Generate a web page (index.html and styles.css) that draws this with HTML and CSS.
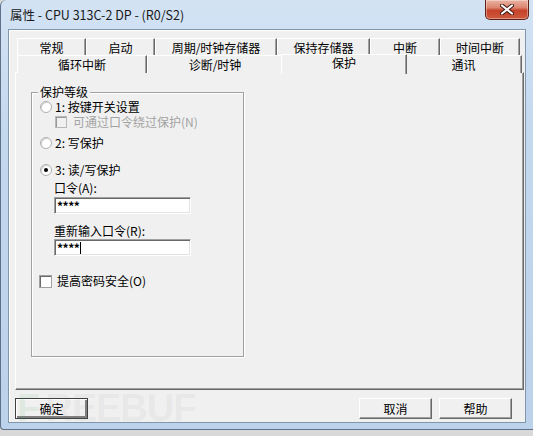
FILE: index.html
```html
<!DOCTYPE html>
<html lang="zh-CN">
<head>
    <meta charset="UTF-8">
    <title>属性 - CPU 313C-2 DP - (R0/S2)</title>
    <link rel="stylesheet" href="styles.css">
</head>
<body>
    <div class="window">
        <div class="titlebar">
            <span class="title">属性 - CPU 313C-2 DP - (R0/S2)</span>
            <div class="close-btn">
                <svg width="14" height="11" viewBox="0 0 14 11">
                    <path d="M2 1.5 L12 9.5 M12 1.5 L2 9.5" stroke="#3a1410" stroke-width="4" stroke-linecap="round"/>
                    <path d="M2 1.5 L12 9.5 M12 1.5 L2 9.5" stroke="#fff" stroke-width="2.2" stroke-linecap="round"/>
                </svg>
            </div>
        </div>

        <div class="client">
            <!-- 选项卡 -->
            <div class="tab-row tab-row-top">
                <div class="tab">常规</div>
                <div class="tab">启动</div>
                <div class="tab">周期/时钟存储器</div>
                <div class="tab">保持存储器</div>
                <div class="tab">中断</div>
                <div class="tab">时间中断</div>
            </div>
            <div class="tab-row tab-row-bottom">
                <div class="tab">循环中断</div>
                <div class="tab">诊断/时钟</div>
                <div class="tab active">保护</div>
                <div class="tab">通讯</div>
            </div>

            <div class="panel">
                <div class="group">
                    <div class="group-title">保护等级</div>

                    <div class="row row-1">
                        <span class="radio"></span>
                        <span>1: 按键开关设置</span>
                    </div>
                    <div class="row row-sub">
                        <span class="checkbox disabled"></span>
                        <span class="text-disabled">可通过口令绕过保护(N)</span>
                    </div>
                    <div class="row row-2">
                        <span class="radio"></span>
                        <span>2: 写保护</span>
                    </div>
                    <div class="row row-3">
                        <span class="radio checked"></span>
                        <span>3: 读/写保护</span>
                    </div>

                    <div class="field-label first">口令(A):</div>
                    <div class="input first">****</div>
                    <div class="field-label second">重新输入口令(R):</div>
                    <div class="input">****<span class="caret"></span></div>

                    <div class="row row-secure">
                        <span class="checkbox"></span>
                        <span>提高密码安全(O)</span>
                    </div>
                </div>
            </div>

            <div class="button-bar">
                <div class="btn default">确定</div>
                <div class="spacer"></div>
                <div class="btn">取消</div>
                <div class="btn">帮助</div>
            </div>
        </div>

        <div class="watermark"><span class="wm-logo">F</span>REEBUF</div>
    </div>
</body>
</html>
```

FILE: styles.css
```css
* {
    box-sizing: border-box;
}

body {
    margin: 0;
    background: #d9d9d9;
    font-family: "Noto Sans CJK SC", sans-serif;
    font-size: 12px;
    color: #000;
}

.window {
    position: relative;
    width: 533px;
    height: 430px;
    background: linear-gradient(to bottom, #d3e3f4 0%, #c4d8ee 30%, #bcd2ea 100%);
    border-left: 1px solid #5d7188;
    border-bottom: 1px solid #5d7188;
    border-top-left-radius: 6px;
    border-bottom-left-radius: 4px;
}

.titlebar {
    height: 29px;
    display: flex;
    justify-content: space-between;
    align-items: flex-start;
}

.title {
    padding: 7px 0 0 9px;
    line-height: 16px;
    font-size: 12.5px;
    color: #1a1a1a;
}

.close-btn {
    width: 44px;
    height: 20px;
    margin-right: 4px;
    display: flex;
    align-items: center;
    justify-content: center;
    background: linear-gradient(to bottom, #eab3a3 0%, #dc8570 40%, #c6432c 55%, #cf5a3c 100%);
    border: 1px solid #5e2219;
    border-top: none;
    border-radius: 0 0 5px 5px;
    box-shadow: inset 0 0 0 1px rgba(255,255,255,0.35);
}

.client {
    height: 394px;
    margin: 0 7px 0 7px;
    padding: 8px 1px 3px 6px;
    background: #f0f0f0;
    border: 1px solid #8196ad;
    box-shadow: inset 1px 1px 0 #fff;
}

/* 选项卡 */
.tab-row {
    display: grid;
    height: 17px;
    margin-left: 2px;
}

.tab-row-top {
    grid-template-columns: 69px 69px 122px 93px 70px 80px;
}

.tab-row-bottom {
    grid-template-columns: 130px 136px 122px 117px;
}

.tab {
    text-align: center;
    line-height: 17px;
    background: #f0f0f0;
    border-top: 1px solid #fff;
    border-left: 1px solid #fff;
    border-right: 1px solid #696969;
    box-shadow: inset -1px 0 0 #a0a0a0;
}

.tab.active {
    position: relative;
    z-index: 1;
    margin: -1px -2px -1px -2px;
    line-height: 15px;
    border-top: 1px solid #fff;
}

.panel {
    width: 509px;
    height: 318px;
    padding: 19px 0 0 15px;
    background: #f0f0f0;
    border-top: 1px solid #fff;
    border-left: 1px solid #fff;
    border-right: 1px solid #696969;
    border-bottom: 1px solid #696969;
    box-shadow: inset -1px -1px 0 #a0a0a0;
}

.group {
    width: 213px;
    height: 265px;
    padding-left: 8px;
    border: 1px solid #a0a0a0;
    box-shadow: 1px 1px 0 #fff, inset 1px 1px 0 #fff;
}

.group-title {
    width: fit-content;
    margin: -9px 0 0 -2px;
    padding: 0 2px;
    line-height: 16px;
    background: #f0f0f0;
}

.row {
    display: flex;
    align-items: center;
    height: 16px;
    line-height: 16px;
}

.row-1 { margin-top: -1px; }
.row-sub { margin-top: -1px; padding-left: 15px; }
.row-2 { margin-top: 5px; }
.row-3 { margin-top: 11px; }
.row-secure { margin-top: 17px; margin-left: -1px; }

.radio {
    width: 12px;
    height: 12px;
    margin-right: 3px;
    border-radius: 50%;
    background: #fff;
    border: 1px solid #b0b0b0;
    box-shadow: inset 1px 1px 0 #d0d0d0;
    display: flex;
    align-items: center;
    justify-content: center;
}

.radio.checked::after {
    content: "";
    width: 4px;
    height: 4px;
    border-radius: 50%;
    background: #000;
}

.checkbox {
    width: 13px;
    height: 13px;
    margin-right: 5px;
    background: #fff;
    border: 1px solid #a0a0a0;
    box-shadow: inset 1px 1px 0 #696969;
}

.checkbox.disabled {
    width: 12px;
    height: 12px;
    margin-right: 6px;
    background: #f0f0f0;
    border-color: #b8b8b8;
    box-shadow: inset 1px 1px 0 #9a9a9a;
}

.text-disabled {
    color: #a3a3a3;
}

.field-label {
    padding-left: 14px;
    line-height: 16px;
}

.field-label.first { margin-top: 2px; }
.field-label.second { margin-top: 9px; }

.input {
    width: 137px;
    height: 17px;
    margin: 0 0 0 14px;
    padding-left: 2px;
    display: flex;
    align-items: center;
    background: #fff;
    border: 1px solid;
    border-color: #a0a0a0 #fff #fff #a0a0a0;
    box-shadow: inset 1px 1px 0 #696969, inset -1px -1px 0 #e3e3e3;
    font-size: 12px;
    line-height: 15px;
    font-weight: bold;
    letter-spacing: -0.5px;
}

.input.first { margin-top: 1px; }

.caret {
    width: 1px;
    height: 12px;
    margin-left: 1px;
    background: #000;
}

/* 底部按钮 */
.button-bar {
    display: flex;
    gap: 7px;
    margin-top: 8px;
    padding-right: 12px;
}

.spacer {
    flex: 1;
}

.btn {
    width: 73px;
    height: 21px;
    line-height: 19px;
    text-align: center;
    background: #f0f0f0;
    border-top: 1px solid #fff;
    border-left: 1px solid #fff;
    border-right: 1px solid #696969;
    border-bottom: 1px solid #696969;
    box-shadow: inset -1px -1px 0 #a0a0a0;
}

.btn.default {
    border: 1px solid #404040;
    box-shadow: inset 1px 1px 0 #fff, inset -2px -2px 0 #808080;
}

.watermark {
    position: absolute;
    left: 16px;
    top: 388px;
    font-family: "Liberation Sans", sans-serif;
    font-weight: bold;
    font-size: 38px;
    line-height: 40px;
    letter-spacing: -1px;
    color: rgba(120, 120, 120, 0.08);
    pointer-events: none;
}

.wm-logo {
    color: rgba(60, 160, 90, 0.1);
    margin-right: 6px;
}
```
